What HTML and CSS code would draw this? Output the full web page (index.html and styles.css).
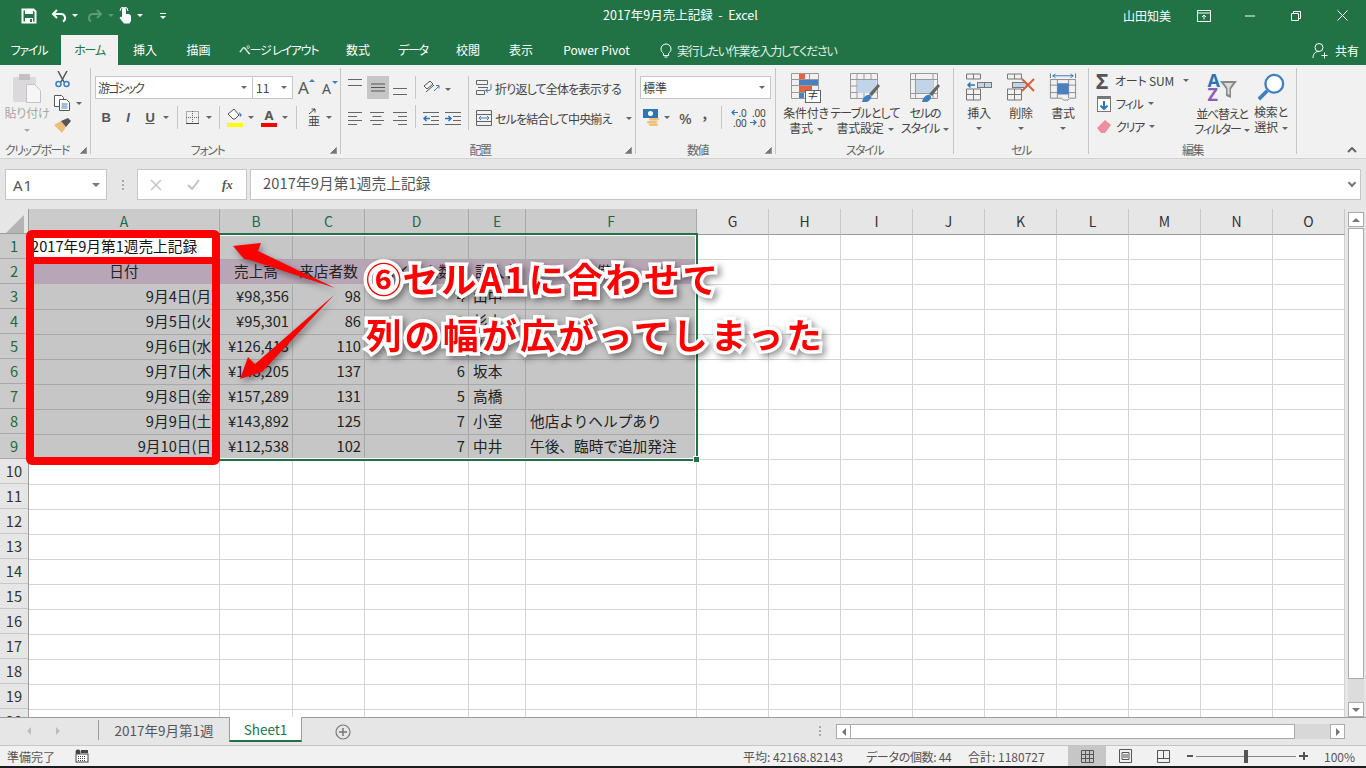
FILE: index.html
```html
<!DOCTYPE html>
<html lang="ja">
<head>
<meta charset="utf-8">
<title>2017年9月売上記録 - Excel</title>
<link rel="stylesheet" href="styles.css">
</head>
<body>
<div class="app">
  <header class="top">
    <div class="titlebar">
      <div class="qat">
        <svg class="q-save" width="16" height="16" viewBox="0 0 16 16"><path d="M1.5 1.5h11l2 2v11h-13z" fill="none" stroke="#fff" stroke-width="2"/><rect x="4" y="2" width="8" height="4" fill="#fff"/><rect x="4" y="10" width="8" height="5" fill="#fff"/><rect x="9" y="11" width="2" height="3" fill="#217346"/></svg>
        <svg class="q-undo" width="16" height="16" viewBox="0 0 16 16"><path d="M6 2L2 6l4 4M2.500 6H10a4 4 0 0 1 2 7.500" fill="none" stroke="#fff" stroke-width="2"/></svg>
        <span class="c-w"></span>
        <svg class="q-redo" width="16" height="16" viewBox="0 0 16 16"><path d="M10 2l4 4-4 4M13.500 6H6a4 4 0 0 0-2 7.500" fill="none" stroke="#5b9a79" stroke-width="2"/></svg>
        <span class="c-d"></span>
        <svg class="q-touch" width="14" height="17" viewBox="0 0 14 17"><path d="M4 2.500a2 2 0 0 1 4 0V7h3l2 1.500V14l-1.500 2.500H6L1.500 11 3 9.500l1 1z" fill="#fff"/><path d="M2 4a4 4 0 0 1 8 0" fill="none" stroke="#fff"/></svg>
        <span class="c-w q-c3"></span>
        <svg class="q-more" width="8" height="8" viewBox="0 0 8 8"><path d="M1 1h6v1H1z" fill="#fff"/><path d="M1 4h6L4 7z" fill="#fff"/></svg>
      </div>
      <div class="doc-title">2017年9月売上記録  -  Excel</div>
      <div class="winctl">
        <span class="user">山田知美</span>
        <svg class="w-rib" width="14" height="12" viewBox="0 0 14 12"><path d="M.5 .5h13v11H.5zM.5 3h13" fill="none" stroke="#fff"/><path d="M7 9.500V5M5 7l2-2 2 2" fill="none" stroke="#fff"/></svg>
        <svg class="w-min" width="10" height="10" viewBox="0 0 10 10"><path d="M0 5h10" stroke="#fff"/></svg>
        <svg class="w-res" width="10" height="10" viewBox="0 0 10 10"><path d="M.5 2.500h7v7h-7zM2.500 2.500v-2h7v7h-2" fill="none" stroke="#fff"/></svg>
        <svg class="w-cls" width="11" height="11" viewBox="0 0 11 11"><path d="M.5 .5l10 10M10.500 .5l-10 10" stroke="#fff"/></svg>
      </div>
    </div>
    <nav class="tabs">
      <span class="tab w-file ks">ファイル</span>
      <span class="tab w-home active ks">ホーム</span>
      <span class="tab w-54">挿入</span>
      <span class="tab w-53">描画</span>
      <span class="tab w-107 ks">ページ レイアウト</span>
      <span class="tab w-52">数式</span>
      <span class="tab w-58 ks">データ</span>
      <span class="tab w-52">校閲</span>
      <span class="tab w-54">表示</span>
      <span class="tab w-97">Power Pivot</span>
      <span class="tell">
        <svg width="12" height="15" viewBox="0 0 12 15"><path d="M3.500 10.500C2 9 1 8 1 6a5 5 0 0 1 10 0c0 2-1 3-2.500 4.500v2h-5zM4.500 14h3" fill="none" stroke="#fff"/></svg>
        <span class="tell-t">実行したい作業を入力してください</span>
      </span>
      <span class="share">
        <svg width="16" height="17" viewBox="0 0 16 17"><circle cx="7" cy="5.500" r="4" fill="none" stroke="#fff"/><path d="M1 16c0-4 2-6.500 6-6.500M9.500 13.500h6M12.500 10.500v6" fill="none" stroke="#fff"/></svg>
        共有
      </span>
    </nav>
  </header>

  <section class="ribbon">
    <div class="grp g-clip">
      <div class="body clip-body">
        <div class="big paste">
          <svg width="30" height="30" viewBox="0 0 30 30"><rect x="1" y="4" width="23" height="25" rx="1" fill="#dcd9dc"/><rect x="7" y="1" width="11" height="6" fill="#c3c0c3"/><path d="M14.500 11.500h8l6 6v12h-14z" fill="#f6f6f6" stroke="#c4c4c4"/></svg>
          <span class="lbl dim">貼り付け</span>
          <span class="c-g"></span>
        </div>
        <div class="clip-side">
          <svg class="sc" width="15" height="17" viewBox="0 0 15 17"><path d="M3 0l6 11M12 0L6 11" stroke="#555" stroke-width="1.500"/><circle cx="3.500" cy="13" r="2.500" fill="none" stroke="#3f7fbf" stroke-width="1.500"/><circle cx="11.500" cy="13" r="2.500" fill="none" stroke="#3f7fbf" stroke-width="1.500"/></svg>
          <div class="side-row">
            <svg width="16" height="16" viewBox="0 0 16 16"><path d="M.5 .5h7l2 2v9H.5z" fill="#fff" stroke="#555"/><path d="M5.500 4.500h7l3 3v8h-10z" fill="#fff" stroke="#555"/><path d="M7.500 9h6M7.500 11h6M7.500 13h6" stroke="#3f7fbf"/></svg>
            <span class="c-s"></span>
          </div>
          <svg width="17" height="15" viewBox="0 0 17 15"><path d="M0 7l7-4 5 6-4 6z" fill="#f0bd7b"/><path d="M7 3l7-3 3 3-5 6z" fill="#555"/></svg>
        </div>
      </div>
      <div class="g-lbl launchy"><span class="lbl-t">クリップボード</span><span class="launch"></span></div>
    </div>

    <div class="grp g-font">
      <div class="body font-body">
        <div class="rowa">
          <div class="combo c-font"><span>游ゴシック</span><i class="c-s"></i></div>
          <div class="combo c-size"><span>11</span><i class="c-s"></i></div>
          <span class="a-big">A<i class="up"></i></span>
          <span class="a-small">A<i class="down"></i></span>
        </div>
        <div class="rowb">
          <span class="fb b">B</span>
          <span class="fb it">I</span>
          <span class="fb u">U</span>
          <span class="c-s m1"></span>
          <span class="vsep s1"></span>
          <svg class="bd" width="13" height="13" viewBox="0 0 13 13"><path d="M.5 .5h12v12H.5zM6.500 0v13M0 6.500h13" fill="none" stroke="#666" stroke-dasharray="1 1"/><path d="M0 12.500h13" stroke="#444"/></svg>
          <span class="c-s m2"></span>
          <span class="vsep s2"></span>
          <div class="swatch fill">
            <svg width="16" height="12" viewBox="0 0 16 12"><path d="M1 6l6-5 5 6-4 4H6z" fill="#fff" stroke="#555"/><path d="M12 4l3 3-2 2z" fill="#3f7fbf"/></svg>
            <i class="yl"></i>
          </div>
          <span class="c-s m3"></span>
          <div class="swatch col-a"><b>A</b><i class="rd"></i></div>
          <span class="c-s m4"></span>
          <span class="vsep s3"></span>
          <span class="asia"><svg width="9" height="7" viewBox="0 0 9 7"><path d="M1 6l6-5M3.500 1H7v3.500" fill="none" stroke="#444"/></svg><b>亜</b></span>
          <span class="c-s m5"></span>
        </div>
      </div>
      <div class="g-lbl launchy"><span class="lbl-t">フォント</span><span class="launch"></span></div>
    </div>

    <div class="grp g-align">
      <div class="body align-body">
        <div class="al-grid">
          <svg class="a1" width="14" height="7" viewBox="0 0 14 7"><path d="M0 .5h14M0 6.500h14" stroke="#666"/></svg>
          <span class="pressed"><svg width="14" height="14" viewBox="0 0 14 14"><path d="M0 3h14M0 6.500h14M0 10h14" stroke="#555"/></svg></span>
          <svg class="a3" width="14" height="7" viewBox="0 0 14 7"><path d="M0 .5h14M0 6.500h14" stroke="#666"/></svg>
          <span class="vsep s4"></span>
          <svg class="orient" width="18" height="14" viewBox="0 0 18 14"><path d="M1 6l6-5 3 3-6 5zM3 12l8-7" fill="none" stroke="#555"/><path d="M11 11l5-5M13 5.500h3v3" fill="none" stroke="#3f7fbf"/></svg>
          <span class="c-s m6"></span>
          <svg class="a4" width="14" height="13" viewBox="0 0 14 13"><path d="M0 .5h14M0 4.500h9M0 8.500h14M0 12.500h9" stroke="#666"/></svg>
          <svg class="a5" width="14" height="13" viewBox="0 0 14 13"><path d="M0 .5h14M2.500 4.500h9M0 8.500h14M2.500 12.500h9" stroke="#666"/></svg>
          <svg class="a6" width="14" height="13" viewBox="0 0 14 13"><path d="M0 .5h14M5 4.500h9M0 8.500h14M5 12.500h9" stroke="#666"/></svg>
          <span class="vsep s5"></span>
          <svg class="a7" width="16" height="13" viewBox="0 0 16 13"><path d="M0 .5h16M8 4.500h8M8 8.500h8M0 12.500h16" stroke="#666"/><path d="M7 6.500H1M3.500 4l-2.500 2.500 2.500 2.500" fill="none" stroke="#2e75b6" stroke-width="1.500"/></svg>
          <svg class="a8" width="16" height="13" viewBox="0 0 16 13"><path d="M0 .5h16M8 4.500h8M8 8.500h8M0 12.500h16" stroke="#666"/><path d="M0 6.500h6M3.500 4L6 6.500 3.500 9" fill="none" stroke="#2e75b6" stroke-width="1.500"/></svg>
        </div>
        <span class="vsep tall"></span>
        <div class="al-wrap">
          <div class="wrapline">
            <svg width="16" height="16" viewBox="0 0 16 16"><path d="M.5 .5h11v4h-11zM.5 10.500h8v4h-8z" fill="none" stroke="#666"/><path d="M2 7.500h10" stroke="#666"/><path d="M15 4v4.500a2 2 0 0 1-2 2H10M12 8.500l-2.500 2 2.500 2" fill="none" stroke="#3f7fbf"/></svg>
            <span>折り返して全体を表示する</span>
          </div>
          <div class="wrapline">
            <svg width="16" height="16" viewBox="0 0 16 16"><path d="M.5 .5h15v15H.5zM0 4.500h16M0 11.500h16" fill="none" stroke="#666"/><path d="M3 8h10M5 6L3 8l2 2M11 6l2 2-2 2" fill="none" stroke="#3f7fbf"/></svg>
            <span class="mg">セルを結合して中央揃え</span>
            <i class="c-s"></i>
          </div>
        </div>
      </div>
      <div class="g-lbl launchy"><span class="lbl-t">配置</span><span class="launch"></span></div>
    </div>

    <div class="grp g-num">
      <div class="body num-body">
        <div class="combo c-num"><span>標準</span><i class="c-s"></i></div>
        <div class="num-row">
          <svg class="cur" width="17" height="17" viewBox="0 0 17 17"><rect x="0" y="0" width="15" height="9" fill="#2e75b6"/><circle cx="7.500" cy="4.500" r="2.500" fill="#fff"/><rect x="6" y="9" width="10" height="2.500" rx="1" fill="#f2c27a"/><rect x="4" y="12" width="10" height="2.500" rx="1" fill="#f2c27a"/><rect x="6" y="14.500" width="9" height="2.500" rx="1" fill="#f2c27a"/></svg>
          <span class="c-s m7"></span>
          <span class="pct">%</span>
          <span class="cma">,</span>
          <span class="vsep s6"></span>
          <span class="dec">
            <svg width="7" height="7" viewBox="0 0 7 7"><path d="M7 3.500H1M3.500 1L1 3.500 3.500 6" fill="none" stroke="#2e75b6" stroke-width="1.200"/></svg><em>.0</em><br><em class="dd">.00</em>
          </span>
          <span class="dec d2">
            <em class="dt">.00</em><br><svg width="7" height="7" viewBox="0 0 7 7"><path d="M0 3.500h6M3.500 1L6 3.500 3.500 6" fill="none" stroke="#2e75b6" stroke-width="1.200"/></svg><em>.0</em>
          </span>
        </div>
      </div>
      <div class="g-lbl launchy"><span class="lbl-t">数値</span><span class="launch"></span></div>
    </div>

    <div class="grp g-style">
      <div class="body style-body">
        <div class="big sb sb1">
          <svg width="30" height="30" viewBox="0 0 30 30"><path d="M.5 .5h27v25H.5zM9.500 0v26M18.500 0v26M0 6.500h28M0 12.500h28M0 19.500h28" fill="none" stroke="#999"/><rect x="8" y="1" width="6" height="5" fill="#e0663f"/><rect x="8" y="7" width="19" height="5" fill="#4a80bd"/><rect x="8" y="13" width="13" height="6" fill="#e0663f"/><rect x="8" y="20" width="5" height="5" fill="#4a80bd"/><rect x="14.500" y="17.500" width="15" height="12" fill="#fff" stroke="#666"/><text x="22" y="27" class="ne">≠</text></svg>
          <span class="lbl">条件付き</span><span class="lbl">書式<i class="c-s"></i></span>
        </div>
        <div class="big sb sb2">
          <svg width="30" height="30" viewBox="0 0 30 30"><path d="M.5 .5h27v25H.5zM0 6.500h28M0 13h28M0 19.500h28M7 0v26M14 0v26M21 0v26" fill="none" stroke="#999"/><rect x="7.500" y="7" width="19" height="13" fill="#c2d4e8"/><path d="M19 21l9-10 2 2-8 10z" fill="#666"/><path d="M12 29c1-5 5-8 8-7 2 2 1 5-3 7z" fill="#3f7fbf"/></svg>
          <span class="lbl ks07">テーブルとして</span><span class="lbl">書式設定<i class="c-s"></i></span>
        </div>
        <div class="big sb sb3">
          <svg width="30" height="30" viewBox="0 0 30 30"><path d="M.5 .5h27v25H.5zM0 6.500h28M0 20.500h28M5.500 0v26M23 0v26" fill="none" stroke="#999"/><rect x="6" y="7" width="17" height="13" fill="#c2d4e8"/><path d="M19 21l9-10 2 2-8 10z" fill="#666"/><path d="M12 29c1-5 5-8 8-7 2 2 1 5-3 7z" fill="#3f7fbf"/></svg>
          <span class="lbl ks">セルの</span><span class="lbl ks">スタイル<i class="c-s"></i></span>
        </div>
      </div>
      <div class="g-lbl"><span class="lbl-t">スタイル</span></div>
    </div>

    <div class="grp g-cell">
      <div class="body cell-body">
        <div class="big cb">
          <svg width="28" height="28" viewBox="0 0 28 28"><path d="M1.500 1h14v5h-14zM8.500 1v5M1.500 16h14v11h-14zM1.500 21.500h14M8.500 16v11" fill="none" stroke="#777"/><rect x="12.500" y="9.500" width="14" height="5" fill="#c2d4e8" stroke="#777"/><path d="M19.500 9v6" stroke="#777"/><path d="M10 12H3M5.500 9.500L3 12l2.500 2.500" fill="none" stroke="#2e75b6" stroke-width="1.500"/></svg>
          <span class="lbl">挿入</span><span class="c-s"></span>
        </div>
        <div class="big cb">
          <svg width="30" height="28" viewBox="0 0 30 28"><path d="M1.500 1h14v5h-14zM8.500 1v5M1.500 16h14v11h-14zM1.500 21.500h14M8.500 16v11" fill="none" stroke="#777"/><rect x="6.500" y="9.500" width="14" height="5" fill="#c2d4e8" stroke="#777"/><path d="M16 6l12 12M28 6L16 18" stroke="#d9603b" stroke-width="2"/></svg>
          <span class="lbl">削除</span><span class="c-s"></span>
        </div>
        <div class="big cb">
          <svg width="28" height="28" viewBox="0 0 28 30"><path d="M.5 .5v5M27.500 .5v5M3 3h22M6 1L3 3l3 2M22 1l3 2-3 2" fill="none" stroke="#2e75b6"/><path d="M.5 7h27v20h-6l-2 2h-5l-2-2H.5zM0 13h28M0 21h28M8 7v20M20 7v20" fill="none" stroke="#888"/><rect x="8" y="11" width="12" height="12" fill="#4a80bd"/></svg>
          <span class="lbl">書式</span><span class="c-s"></span>
        </div>
      </div>
      <div class="g-lbl"><span class="lbl-t">セル</span></div>
    </div>

    <div class="grp g-edit">
      <div class="body edit-body">
        <div class="ed-list">
          <div class="ed-row"><span class="sigma">Σ</span><span class="ed-t">オート SUM</span><i class="c-s sum-c"></i></div>
          <div class="ed-row"><svg class="ed-i" width="14" height="16" viewBox="0 0 14 16"><rect x=".5" y=".5" width="13" height="15" fill="#fff" stroke="#777"/><rect x="0" y="0" width="14" height="3" fill="#777"/><path d="M7 5v8M3.500 9.500L7 13l3.500-3.500" fill="none" stroke="#2e75b6" stroke-width="2"/></svg><span class="ed-t ks">フィル</span><i class="c-s"></i></div>
          <div class="ed-row"><svg class="ed-i" width="14" height="13" viewBox="0 0 14 13"><path d="M0 8l8-8 6 5-6 8H4z" fill="#ee8fa0"/></svg><span class="ed-t ks">クリア</span><i class="c-s"></i></div>
        </div>
        <div class="big eb">
          <div class="sort"><span class="az"><b class="za">A</b><b class="zz">Z</b></span><svg width="17" height="20" viewBox="0 0 17 20"><path d="M0 1h17l-6 8v9l-5-2V9z" fill="#888"/><path d="M4 3h9l-3.500 5v7l-2-1V8z" fill="#ddd"/></svg></div>
          <span class="lbl ks">並べ替えと</span><span class="lbl ks">フィルター<i class="c-s"></i></span>
        </div>
        <div class="big eb2">
          <svg width="28" height="28" viewBox="0 0 30 30"><circle cx="18.500" cy="11.500" r="9.500" fill="#fff" stroke="#3f7fbf" stroke-width="2.500"/><path d="M11 19L2 28" stroke="#3f7fbf" stroke-width="4"/></svg>
          <span class="lbl">検索と</span><span class="lbl">選択<i class="c-s"></i></span>
        </div>
      </div>
      <div class="g-lbl"><span class="lbl-t">編集</span></div>
    </div>

    <div class="collapse"><svg width="10" height="6" viewBox="0 0 10 6"><path d="M1 5l4-4 4 4" fill="none" stroke="#666" stroke-width="2"/></svg></div>
  </section>

  <section class="fbar">
    <div class="namebox"><span>A1</span><i class="c-f"></i></div>
    <div class="fdots"><i></i><i></i><i></i></div>
    <div class="fbtns">
      <svg width="12" height="12" viewBox="0 0 12 12"><path d="M1 1l10 10M11 1L1 11" stroke="#c4c4c4" stroke-width="1.500"/></svg>
      <svg width="13" height="11" viewBox="0 0 13 11"><path d="M1 6l4 4 7-9" fill="none" stroke="#c4c4c4" stroke-width="2"/></svg>
      <span class="fx">fx</span>
    </div>
    <div class="finput">2017年9月第1週売上記録</div>
    <i class="c-v"></i>
  </section>

  <section class="sheetwrap">
    <div class="col rh">
      <div class="corner"><svg width="18" height="18" viewBox="0 0 18 18"><path d="M18 0v18H0z" fill="#b4b4b4"/></svg></div>
      <div class="rn s">1</div><div class="rn s">2</div><div class="rn s">3</div><div class="rn s">4</div><div class="rn s">5</div><div class="rn s">6</div><div class="rn s">7</div><div class="rn s">8</div><div class="rn s">9</div>
      <div class="rn">10</div><div class="rn">11</div><div class="rn">12</div><div class="rn">13</div><div class="rn">14</div><div class="rn">15</div><div class="rn">16</div><div class="rn">17</div><div class="rn">18</div><div class="rn">19</div><div class="rn">20</div>
    </div>
    <div class="col w191"><div class="hd s">A</div><div class="cells">
      <div class="c t1">2017年9月第1週売上記録</div><div class="c p ctr">日付</div><div class="c r">9月4日(月)</div><div class="c r">9月5日(火)</div><div class="c r">9月6日(水)</div><div class="c r">9月7日(木)</div><div class="c r">9月8日(金)</div><div class="c r">9月9日(土)</div><div class="c r">9月10日(日)</div>
    </div></div>
    <div class="col w73"><div class="hd s">B</div><div class="cells">
      <div class="c"></div><div class="c p ctr">売上高</div><div class="c r">¥98,356</div><div class="c r">¥95,301</div><div class="c r">¥126,413</div><div class="c r">¥148,205</div><div class="c r">¥157,289</div><div class="c r">¥143,892</div><div class="c r">¥112,538</div>
    </div></div>
    <div class="col w72"><div class="hd s">C</div><div class="cells">
      <div class="c"></div><div class="c p ctr">来店者数</div><div class="c r">98</div><div class="c r">86</div><div class="c r">110</div><div class="c r">137</div><div class="c r">131</div><div class="c r">125</div><div class="c r">102</div>
    </div></div>
    <div class="col w104"><div class="hd s">D</div><div class="cells">
      <div class="c"></div><div class="c p ctr">バイト人数</div><div class="c r">4</div><div class="c r">3</div><div class="c r">4</div><div class="c r">6</div><div class="c r">5</div><div class="c r">7</div><div class="c r">7</div>
    </div></div>
    <div class="col w57"><div class="hd s">E</div><div class="cells">
      <div class="c"></div><div class="c p ctr">記入者</div><div class="c l">山中</div><div class="c l">杉本</div><div class="c l">松本</div><div class="c l">坂本</div><div class="c l">高橋</div><div class="c l">小室</div><div class="c l">中井</div>
    </div></div>
    <div class="col w171"><div class="hd s">F</div><div class="cells">
      <div class="c"></div><div class="c p ctr">備考</div><div class="c"></div><div class="c"></div><div class="c"></div><div class="c"></div><div class="c"></div><div class="c l">他店よりヘルプあり</div><div class="c l">午後、臨時で追加発注</div>
    </div></div>
    <div class="col w72"><div class="hd">G</div><div class="cells"></div></div>
    <div class="col w72"><div class="hd">H</div><div class="cells"></div></div>
    <div class="col w72"><div class="hd">I</div><div class="cells"></div></div>
    <div class="col w72"><div class="hd">J</div><div class="cells"></div></div>
    <div class="col w72"><div class="hd">K</div><div class="cells"></div></div>
    <div class="col w72"><div class="hd">L</div><div class="cells"></div></div>
    <div class="col w72"><div class="hd">M</div><div class="cells"></div></div>
    <div class="col w72"><div class="hd">N</div><div class="cells"></div></div>
    <div class="col w72"><div class="hd">O</div><div class="cells"></div></div>
    <div class="vscroll">
      <span class="sbtn"><i class="tri-up"></i></span>
      <span class="vthumb"></span>
      <span class="vtrack"></span>
      <span class="sbtn"><i class="tri-dn"></i></span>
    </div>
  </section>

  <section class="sheetbar">
    <span class="nav-l"></span><span class="nav-r"></span>
    <span class="stab">2017年9月第1週</span>
    <span class="stab cur-tab">Sheet1</span>
    <svg class="plus" width="16" height="16" viewBox="0 0 16 16"><circle cx="8" cy="8" r="7" fill="none" stroke="#777" stroke-width="1.200"/><path d="M8 4v8M4 8h8" stroke="#777" stroke-width="1.500"/></svg>
    <div class="sdots"><i></i><i></i><i></i></div>
    <div class="hscroll">
      <span class="hbtn"><i class="tri-l"></i></span>
      <span class="hthumb"></span>
      <span class="htrack"></span>
      <span class="hbtn"><i class="tri-r"></i></span>
    </div>
  </section>

  <footer class="status">
    <span class="ready">準備完了</span>
    <svg class="macro" width="14" height="14" viewBox="0 0 14 14"><circle cx="3" cy="3" r="2.500" fill="#444"/><rect x="1" y="5" width="12" height="8" fill="#fff" stroke="#444"/><rect x="6" y="1" width="7" height="3" fill="#444"/><path d="M3 7.500h8M3 9.500h8M3 11.500h8" stroke="#444" stroke-dasharray="1 1"/></svg>
    <span class="st-a">平均: 42168.82143</span>
    <span class="st-b">データの個数: 44</span>
    <span class="st-c">合計: 1180727</span>
    <span class="view on"><svg width="13" height="13" viewBox="0 0 13 13"><path d="M.5 .5h12v12H.5zM4.500 0v13M8.500 0v13M0 4.500h13M0 8.500h13" fill="none" stroke="#555"/></svg></span>
    <span class="view"><svg width="13" height="14" viewBox="0 0 13 14"><path d="M.5 .5h12v13H.5zM3 3.500h7v7H3zM4 6h5M4 8h5" fill="none" stroke="#555"/></svg></span>
    <span class="view"><svg width="13" height="13" viewBox="0 0 13 13"><path d="M.5 .5h12v12H.5zM0 8.500h13M6.500 0v8" fill="none" stroke="#555"/></svg></span>
    <span class="z-minus"></span>
    <span class="slider"><i></i></span>
    <span class="z-plus"></span>
    <span class="zoomv">100%</span>
  </footer>
  <div class="strip"></div>

  <div class="selbox"><i></i></div>
  <div class="redbox"></div>
  <div class="redbar"></div>
  <svg class="arrows" width="1366" height="768" viewBox="0 0 1366 768">
    <path d="M233 246L261 243 258 251 335 288 250 260 244 259Z" fill="#f00"/>
    <path d="M240 379L248 357 255 364 334 295 262 372 268 370Z" fill="#f00"/>
  </svg>
  <div class="note">
    <div class="n1"><span class="n6">⑥</span>セルA1に合わせて</div>
    <div class="n2">列の幅が広がってしまった</div>
  </div>
</div>
</body>
</html>
```

FILE: styles.css
```css
*{box-sizing:border-box}
html,body{margin:0;padding:0}
body{width:1366px;height:768px;overflow:hidden;background:#e6e6e6}
i,em{font-style:normal}
svg{display:block;flex:none}
.app{position:relative;width:1366px;height:768px;display:flex;flex-direction:column;overflow:hidden;
  font-family:"Noto Sans CJK JP","Noto Sans",sans-serif;font-size:12px;color:#444;font-feature-settings:"palt";}
.ks{letter-spacing:-1.200px}
.ks07{letter-spacing:-.8px}

/* carets */
.c-s,.c-w,.c-d,.c-g{display:inline-block;flex:none;width:0;height:0;border-left:3px solid transparent;border-right:3px solid transparent;border-top:3px solid #666;}
.c-w{border-top-color:#fff}
.c-d{border-top-color:#5b9a79}
.c-g{border-top-color:#a8a8a8}

/* top */
.top{height:65px;flex:none;background:#217346;color:#fff}
.titlebar{height:35px;display:flex;align-items:center;position:relative;padding-bottom:4px}
.qat{display:flex;align-items:center;height:30px}
.q-save{margin-left:21px}
.q-undo{margin-left:14px}
.qat .c-w{margin-left:5px}
.q-redo{margin-left:9px}
.qat .c-d{margin-left:5px}
.q-touch{margin-left:4px}
.q-c3{margin-left:5px}
.q-more{margin-left:16px}
.doc-title{position:absolute;left:603px;top:5px;white-space:pre;font-size:12.500px;line-height:19px;font-feature-settings:normal}
.winctl{margin-left:auto;display:flex;align-items:center}
.user{font-size:12px;margin-right:26px;font-feature-settings:normal}
.w-min{margin-left:34px}
.w-res{margin-left:36px}
.w-cls{margin-left:36px;margin-right:18px}
.tabs{height:30px;display:flex;align-items:stretch;position:relative}
.tab{display:flex;align-items:center;justify-content:center;white-space:pre;padding-bottom:1px}
.tab.active{background:#f1f1f1;color:#217346}
.w-file{width:61px;padding-right:3px}.w-home{width:57px}.w-54{width:54px}.w-53{width:53px}.w-107{width:107px}.w-52{width:52px}.w-58{width:58px}.w-97{width:97px}
.tell{display:flex;align-items:center;gap:5px;margin-left:15px;color:#e3efe8}
.tell-t{letter-spacing:-1.200px}
.share{margin-left:auto;margin-right:7px;display:flex;align-items:center;gap:7px}

/* ribbon */
.ribbon{height:94px;flex:none;background:#f1f1f1;border-bottom:1px solid #d2d2d2;display:flex;position:relative;padding-top:3px;letter-spacing:-.2px}
.grp{display:flex;flex-direction:column;border-right:1px solid #c6c6c6;height:86px;flex:none}
.g-clip{width:91px}.g-font{width:250px}.g-align{width:295px}.g-num{width:140px}.g-style{width:178px}.g-cell{width:135px}.g-edit{width:208px}
.body{height:74px;flex:none}
.g-lbl{flex:none;height:11px;line-height:11px;margin-top:2px;display:flex;align-items:center;justify-content:center;position:relative;color:#666;font-size:12px;letter-spacing:-1.400px}
.launchy{padding-right:16px}
.launch{position:absolute;right:3px;bottom:1px;width:7px;height:7px;border:1px solid #999;border-top:0;border-left:0;background:linear-gradient(135deg,transparent 55%,#777 55%)}
.big{display:flex;flex-direction:column;align-items:center;flex:none;line-height:15px}
.big .lbl{white-space:nowrap;color:#444}
.big .lbl .c-s{margin-left:4px;vertical-align:2px}
.big>svg{margin-bottom:2px}
.big .dim{color:#a6a6a6}

.clip-body{display:flex}
.paste{width:44px;margin-left:5px;padding-top:5px}
.paste .c-g{margin-top:9px}
.clip-side{margin-left:5px;padding-top:3px;display:flex;flex-direction:column;gap:7px}
.sc{margin-left:1px}
.side-row{display:flex;align-items:center;gap:6px}

.font-body{padding:8px 0 0 4px}
.rowa{display:flex;align-items:center;height:23px}
.combo{height:23px;background:#fff;border:1px solid #c6c6c6;display:flex;align-items:center;justify-content:space-between;padding:0 5px 0 2px;font-size:12px;color:#444;letter-spacing:0}
.c-font{width:158px}
.c-font span{letter-spacing:-1.900px}
.c-size{width:40px;padding-left:3px;border-left:0}
.a-big,.a-small{position:relative;font-family:"Noto Sans",sans-serif;font-feature-settings:normal;color:#555}
.a-big{font-size:17px;margin-left:5px;width:24px}
.a-small{font-size:14px;width:14px;line-height:17px;padding-top:2px}
.up,.down{position:absolute;top:3px;left:10px;border-left:3px solid transparent;border-right:3px solid transparent}
.up{border-bottom:3px solid #3f7fbf;left:11px}
.down{border-top:3px solid #3f7fbf}
.rowb{display:flex;align-items:center;height:25px;margin-top:6px}
.fb{width:22px;text-align:center;color:#555;font-family:"Liberation Sans",sans-serif;font-size:13px;font-weight:700}
.fb.it{font-style:italic}
.fb.u{text-decoration:underline}
.vsep{display:block;flex:none;width:1px;background:#c6c6c6;height:23px}
.m1{margin-left:2px}
.s1{margin-left:8px}
.bd{margin-left:8px}
.m2{margin-left:7px}
.s2{margin-left:7px}
.swatch{position:relative;width:16px;height:19px;margin-left:7px}
.swatch svg{position:absolute;left:0;top:0}
.swatch i{position:absolute;left:0;bottom:0;width:16px;height:4px}
.yl{background:#ff0}
.rd{background:#f00}
.col-a{margin-left:7px}
.col-a b{display:block;text-align:center;font-family:"Noto Sans",sans-serif;font-size:13px;line-height:14px;color:#555;font-weight:700}
.m3{margin-left:5px}
.m4{margin-left:5px}
.s3{margin-left:8px}
.asia{width:14px;margin-left:11px;display:flex;flex-direction:column;align-items:flex-start;line-height:12px;color:#444}
.asia b{font-size:12px;font-weight:400}
.m5{margin-left:4px}

.align-body{display:flex;padding-top:8px}
.al-grid{width:123px;display:grid;grid-template-columns:22px 22px 26px 8px 45px;grid-template-rows:23px 31px;margin-left:4px}
.pressed{grid-column:2;width:22px;height:23px;background:#c6c6c6;display:flex;align-items:center;justify-content:center}
.a1{grid-column:1;grid-row:1;margin:3px 0 0 3px}
.a3{grid-column:3;grid-row:1;margin:12px 0 0 4px}
.s4{grid-column:4;grid-row:1}
.orient{grid-column:5;grid-row:1;margin:4px 0 0 0}
.m6{grid-column:5;grid-row:1;margin:12px 0 0 22px}
.a4{grid-column:1;grid-row:2;margin:13px 0 0 3px}
.a5{grid-column:2;grid-row:2;margin:13px 0 0 3px}
.a6{grid-column:3;grid-row:2;margin:13px 0 0 4px}
.s5{grid-column:4;grid-row:2;margin-top:6px}
.a7{grid-column:5;grid-row:2;margin:13px 0 0 0}
.a8{grid-column:5;grid-row:2;margin:13px 0 0 22px}
.tall{height:54px}
.al-wrap{margin-left:7px;display:flex;flex-direction:column;gap:8px;padding-top:1px}
.wrapline{display:flex;align-items:center;gap:3px;height:22px;white-space:nowrap;color:#444;letter-spacing:-.8px}
.wrapline .c-s{margin-left:11px}

.num-body{padding:8px 0 0 4px}
.c-num{width:131px}
.num-row{display:flex;align-items:center;height:25px;margin-top:6px;margin-left:3px}
.m7{margin-left:4px}
.pct{margin-left:9px;font-size:15px;color:#555;font-weight:500;font-family:"Noto Sans",sans-serif;font-feature-settings:normal}
.cma{margin-left:11px;font-size:14px;font-weight:700;color:#555;line-height:15px;margin-top:-8px;width:5px}
.s6{margin-left:13px}
.dec{margin-left:7px;font-size:10px;line-height:10px;color:#444;width:18px;text-align:right;font-family:"Noto Sans",sans-serif;font-feature-settings:normal}
.dec svg{display:inline-block;vertical-align:1px;margin-right:1px}
.d2{margin-left:3px;width:16px}

.style-body{display:flex;padding:5px 0 0 4px}
.sb1{width:52px}.sb2{width:66px}.sb3{width:54px}
.sb .lbl{line-height:15px}

.cell-body{display:flex;padding:5px 0 0 4px}
.cb{width:42px}
.cb svg{margin-bottom:4px}
.cb .c-s{margin-top:7px}

.edit-body{display:flex;padding-top:1px}
.ed-list{width:105px;display:flex;flex-direction:column;padding-left:7px}
.ed-row{display:flex;align-items:center;height:23px;color:#444}
.ed-row .c-s{margin-left:5px}
.ed-row .sum-c{margin-left:9px}
.sigma{width:17px;font-size:21px;font-weight:700;line-height:20px;color:#555;font-family:"Noto Sans",sans-serif;font-feature-settings:normal}
.ed-t{margin-left:2px;white-space:nowrap}
.ed-i{margin-right:3px;margin-left:1px}
.eb{width:56px;padding-top:4px}
.eb .lbl .c-s{margin-left:3px}
.sort{display:flex;align-items:flex-start;height:31px;margin-bottom:2px}
.sort svg{margin:7px 0 0 -1px}
.az{display:flex;flex-direction:column;font-family:"Noto Sans",sans-serif;font-feature-settings:normal;font-size:18px;line-height:14px;width:13px}
.za{color:#2e75b6}
.zz{color:#8e5bb5}
.eb2{width:44px;padding-top:4px;margin-left:-1px}
.eb2 svg{margin-bottom:3px}
.collapse{position:absolute;right:9px;top:82px}

/* formula bar */
.fbar{height:50px;flex:none;background:#e6e6e6;display:flex;align-items:center;padding-top:1px;position:relative}
.namebox{margin-left:5px;width:102px;height:31px;background:#fff;border:1px solid #c6c6c6;display:flex;align-items:center;justify-content:space-between;padding:0 6px 0 7px;font-size:15px;letter-spacing:1px;color:#555;font-family:"Noto Sans",sans-serif}
.c-f{border-left:4px solid transparent;border-right:4px solid transparent;border-top:4px solid #777}
.fdots{display:flex;flex-direction:column;gap:2px;margin-left:15px}
.fdots i,.sdots i{display:block;width:2px;height:2px;background:#aaa}
.fbtns{margin-left:13px;width:110px;height:31px;background:#fff;border:1px solid #c6c6c6;display:flex;align-items:center;padding-left:12px}
.fbtns svg:nth-child(2){margin-left:25px}
.fx{margin-left:22px;font-family:"Liberation Serif",serif;font-style:italic;font-weight:700;color:#555;font-size:13px}
.finput{margin-left:3px;width:1111px;height:31px;background:#fff;border:1px solid #c6c6c6;padding-left:12px;font-size:14.670px;letter-spacing:.1px;line-height:26px;color:#555;font-feature-settings:normal}
.c-v{position:absolute;left:1349px;top:21px;width:6px;height:6px;border-right:2px solid #777;border-bottom:2px solid #777;transform:rotate(45deg)}

/* sheet */
.sheetwrap{height:508px;flex:none;display:flex;overflow:hidden;background:#e6e6e6;font-size:14.670px;font-feature-settings:normal;color:#222;position:relative}
.col{flex:none;display:flex;flex-direction:column;height:508px}
.w191{width:191px}.w73{width:73px}.w72{width:72px}.w104{width:104px}.w57{width:57px}.w171{width:171px}
.rh{width:29px;border-right:1px solid #9c9c9c}
.corner{height:26px;border-bottom:1px solid #9c9c9c;padding:6px 0 0 6px;background:#e6e6e6}
.rn{height:25px;flex:none;border-bottom:1px solid #c8c8c8;text-align:center;line-height:23px;font-size:14.670px;color:#333;background:#e6e6e6}
.rn.s{background:#cbcbcb;border-bottom-color:#a8a8a8;color:#1d6b41}
.hd{height:26px;flex:none;border-bottom:1px solid #9c9c9c;border-right:1px solid #c8c8c8;text-align:center;line-height:25px;font-size:14px;color:#333;background:#e6e6e6}
.hd.s{background:#cbcbcb;border-right-color:#a8a8a8;color:#1d6b41}
.cells{flex:1;border-right:1px solid #d4d4d4;background:#fff repeating-linear-gradient(to bottom,transparent 0 24px,#d4d4d4 24px 25px)}
.c{height:25px;background:#c6c6c6;border-bottom:1px solid #a8a8a8;border-right:1px solid #a8a8a8;margin-right:-1px;line-height:22px;white-space:nowrap;overflow:hidden;padding:0 3px}
.c.p{background:#b7a6b5;border-bottom-color:#c6c6c6;border-right-color:#b7a6b5}
.ctr{text-align:center}
.r{text-align:right}
.l{text-align:left;padding-left:4px}
.t1{background:#fff;padding-left:2px;overflow:visible;border-right:0;border-bottom:0;color:#111}

.vscroll{margin-left:3px;width:16px;display:flex;flex-direction:column;padding-top:3px;height:508px}
.sbtn{display:flex;flex:none;align-items:center;justify-content:center;height:15px;width:16px;background:#fff;border:1px solid #ababab}
.vthumb{display:block;flex:none;height:451px;width:16px;background:#fff;border:1px solid #ababab;margin-top:1px}
.vtrack{display:block;flex:1;background:#dcdcdc}
.tri-up{border-left:4px solid transparent;border-right:4px solid transparent;border-bottom:4px solid #777}
.tri-dn{border-left:4px solid transparent;border-right:4px solid transparent;border-top:4px solid #777}

/* sheet tabs */
.sheetbar{height:28px;flex:none;background:#e6e6e6;border-top:1px solid #9c9c9c;display:flex;align-items:flex-start;position:relative}
.nav-l,.nav-r{flex:none;width:0;height:0;margin-top:9px;border-top:4px solid transparent;border-bottom:4px solid transparent}
.nav-l{margin-left:27px;border-right:4px solid #bdbdbd}
.nav-r{margin-left:25px;border-left:4px solid #bdbdbd}
.stab{display:flex;align-items:center;justify-content:center;font-size:13.500px;color:#555;font-feature-settings:normal}
.stab:not(.cur-tab){margin-left:38px;width:131px;border-left:1px solid #9c9c9c;height:20px;margin-top:2px}
.cur-tab{width:73px;margin-top:-1px;height:25px;background:#fff;color:#217346;border-left:1px solid #9c9c9c;border-right:1px solid #9c9c9c;border-bottom:2px solid #217346}
.plus{margin:6px 0 0 33px}
.sdots{display:flex;flex-direction:column;gap:2px;margin:8px 0 0 468px}
.hscroll{display:flex;margin:6px 0 0 15px;width:509px;height:15px}
.hbtn{display:flex;align-items:center;justify-content:center;flex:none;width:15px;height:15px;background:#fff;border:1px solid #ababab}
.hthumb{flex:none;width:444px;height:15px;background:#fff;border:1px solid #ababab;border-left:0}
.htrack{flex:1;background:#d8d8d8}
.tri-l{border-top:4px solid transparent;border-bottom:4px solid transparent;border-right:4px solid #777}
.tri-r{border-top:4px solid transparent;border-bottom:4px solid transparent;border-left:4px solid #777}

/* status */
.status{height:21px;flex:none;background:#f1f1f1;border-top:1px solid #c6c6c6;display:flex;align-items:center;color:#555;font-size:12px;white-space:nowrap}
.ready{margin-left:7px;width:48px}
.macro{margin-left:20px}
.st-a{position:absolute;left:743px}
.st-b{position:absolute;left:866px;letter-spacing:-.3px}
.st-c{position:absolute;left:968px}
.view{display:flex;align-items:center;justify-content:center;width:38px;height:20px}
.view.on{background:#c6c6c6;margin-left:979px}
.z-minus{width:6px;height:2px;background:#555;margin-left:5px;flex:none}
.slider{position:relative;display:block;flex:none;width:100px;height:1px;background:#888;margin-left:3px}
.slider i{position:absolute;left:48px;top:-6px;width:4px;height:13px;background:#555}
.z-plus{position:relative;display:block;flex:none;width:9px;height:2px;background:#555;margin-left:3px}
.z-plus:after{content:"";position:absolute;left:3.500px;top:-3px;width:2px;height:8px;background:#555}
.zoomv{margin-left:16px}
.strip{height:2px;flex:none;background:#1c1c1c}

/* overlays */
.selbox{position:absolute;left:28px;top:233px;width:670px;height:228px;border:2px solid #217346;box-shadow:inset 0 0 0 1px #fff;pointer-events:none}
.selbox i{position:absolute;right:-3px;bottom:-3px;width:5px;height:5px;background:#217346;outline:1px solid #fff}
.redbox{position:absolute;left:26px;top:230px;width:194px;height:235px;border:8px solid #f00;border-radius:6px}
.redbar{position:absolute;left:30px;top:257px;width:186px;height:7px;background:#f00}
.arrows{position:absolute;left:0;top:0;filter:drop-shadow(2px 3px 3px rgba(0,0,0,.4))}
.note{position:absolute;left:366px;top:250px;font-size:35.500px;line-height:56px;font-weight:700;color:#f00;white-space:nowrap;letter-spacing:3px;font-feature-settings:normal;-webkit-text-stroke:7px #fff;paint-order:stroke fill;filter:drop-shadow(3px 3px 3px rgba(0,0,0,.4))}
.n1{letter-spacing:2.900px}
.n6{letter-spacing:1px}
.ne{font-size:12px;text-anchor:middle;fill:#333}
```
